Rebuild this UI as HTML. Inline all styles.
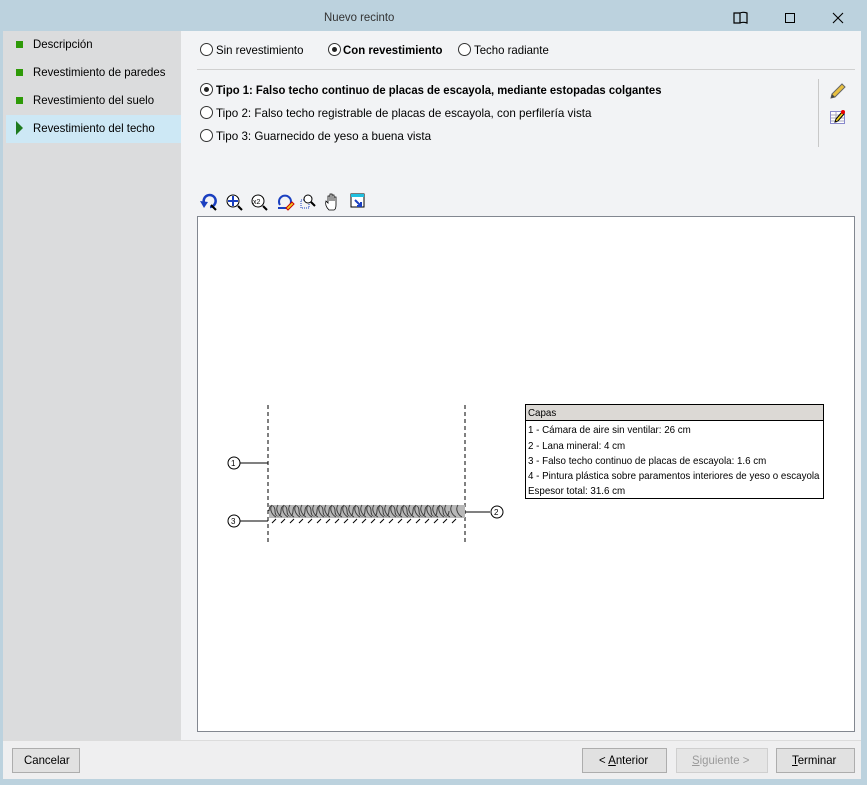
<!DOCTYPE html>
<html><head><meta charset="utf-8"><style>
*{margin:0;padding:0;box-sizing:border-box}
body{width:867px;height:785px;background:#bcd2de;font-family:"Liberation Sans",sans-serif;font-size:12px;color:#000;position:relative;overflow:hidden}
.a{position:absolute}
.n{position:absolute;white-space:nowrap;transform:scaleX(.95);transform-origin:0 50%}
.s{position:absolute;white-space:nowrap;font-size:10.5px;transform:scaleX(.93);transform-origin:0 50%;left:528px}
.rad{position:absolute;width:13px;height:13px;border:1px solid #333;border-radius:50%;background:#fff}
.rad.on::after{content:"";position:absolute;left:3px;top:3px;width:5px;height:5px;border-radius:50%;background:#222}
.btn{position:absolute;top:748px;height:25px;border:1px solid #adadad;background:#e1e1e1;text-align:center;line-height:23px}
.sq{position:absolute;left:16px;width:7px;height:7px;background:#2e9a07}
</style></head><body>
<div class="a" style="left:0;top:0;width:867px;height:31px;background:#bcd2de"></div>
<div class="n" style="left:324px;top:10px;color:#333">Nuevo recinto</div>
<svg class="a" style="left:733px;top:11px" width="16" height="14"><path d="M1 2h6v10H1zM7 2c2-1 4-1 7 0v10c-3-1-5-1-7 0" fill="none" stroke="#000" stroke-width="1.2"/></svg>
<div class="a" style="left:785px;top:13px;width:10px;height:10px;border:1px solid #000"></div>
<svg class="a" style="left:832px;top:12px" width="12" height="12"><path d="M1 1L11 11M11 1L1 11" stroke="#000" stroke-width="1.1"/></svg>
<div class="a" style="left:3px;top:31px;width:178px;height:709px;background:#dbdcdd"></div>
<div class="a" style="left:181px;top:31px;width:680px;height:709px;background:#f2f3f5"></div>
<div class="a" style="left:3px;top:740px;width:858px;height:39px;background:#efeff0;border-top:1px solid #dcdcdc"></div>
<div class="sq" style="top:41px"></div><div class="n" style="left:33px;top:37px">Descripción</div>
<div class="sq" style="top:69px"></div><div class="n" style="left:33px;top:65px">Revestimiento de paredes</div>
<div class="sq" style="top:97px"></div><div class="n" style="left:33px;top:93px">Revestimiento del suelo</div>
<div class="a" style="left:6px;top:115px;width:175px;height:28px;background:#cde8f5"></div>
<svg class="a" style="left:16px;top:121px" width="8" height="14"><path d="M0 0L7 7L0 14z" fill="#1e7a1e"/></svg>
<div class="n" style="left:33px;top:121px">Revestimiento del techo</div>
<div class="rad" style="left:200px;top:43px"></div><div class="n" style="left:216px;top:43px">Sin revestimiento</div>
<div class="rad on" style="left:328px;top:43px"></div><div class="n" style="left:343px;top:43px;font-weight:bold">Con revestimiento</div>
<div class="rad" style="left:458px;top:43px"></div><div class="n" style="left:474px;top:43px">Techo radiante</div>
<div class="a" style="left:197px;top:69px;width:658px;height:1px;background:#d0d0d0"></div>
<div class="rad on" style="left:200px;top:83px"></div><div class="n" style="left:216px;top:83px;font-weight:bold;transform:scaleX(.94)">Tipo 1: Falso techo continuo de placas de escayola, mediante estopadas colgantes</div>
<div class="rad" style="left:200px;top:106px"></div><div class="n" style="left:216px;top:106px;transform:scaleX(.97)">Tipo 2: Falso techo registrable de placas de escayola, con perfilería vista</div>
<div class="rad" style="left:200px;top:129px"></div><div class="n" style="left:216px;top:129px;transform:scaleX(.97)">Tipo 3: Guarnecido de yeso a buena vista</div>
<div class="a" style="left:818px;top:79px;width:1px;height:68px;background:#c8c8c8"></div>
<svg class="a" style="left:829px;top:82px" width="18" height="18"><path d="M2 16l1-4L13 2l3 3L6 15z" fill="#e8c040" stroke="#666"/><path d="M2 16l1-4 3 3z" fill="#444"/></svg>
<svg class="a" style="left:830px;top:109px" width="16" height="16"><rect x="0.5" y="2.5" width="14" height="12" fill="#fff" stroke="#8888cc"/><path d="M1 6h13M1 9h13M1 12h13M6 3v11" stroke="#aab"/><path d="M5 13l1-3 6-7 2 2-6 7z" fill="#f0d020" stroke="#000"/><circle cx="13" cy="3" r="2" fill="#e00"/></svg>
<svg class="a" style="left:198px;top:191px" width="175" height="22" font-size="8">
<path d="M6 12a6 6 0 1 1 6 4" fill="none" stroke="#1a3fc0" stroke-width="2.5"/><path d="M2 10l4 7 4-6z" fill="#1a3fc0"/><path d="M13 14l5 5" stroke="#000" stroke-width="2"/>
<circle cx="35" cy="10" r="6" fill="#fff" stroke="#000"/><path d="M35 5v10M30 10h10" stroke="#1a3fc0" stroke-width="2"/><path d="M40 15l4 4" stroke="#000" stroke-width="2"/>
<circle cx="60" cy="10" r="6" fill="#fff" stroke="#000"/><text x="55" y="13" font-size="7">x2</text><path d="M65 15l4 4" stroke="#000" stroke-width="2"/>
<path d="M82 14a6 6 0 1 1 10 0" fill="none" stroke="#1a3fc0" stroke-width="2"/><path d="M80 17h12" stroke="#1a3fc0" stroke-width="2"/><path d="M88 17l6-6 2 2-6 6z" fill="#f0d020" stroke="#c00"/>
<rect x="103" y="9" width="8" height="8" fill="none" stroke="#1a3fc0" stroke-dasharray="1 1"/><circle cx="110" cy="8" r="4" fill="#fff" stroke="#000"/><path d="M113 11l4 4" stroke="#000" stroke-width="2"/>
<path d="M131 19c-3-3-4-6-3-9l2 2V5h2v5V3h2v7V4h2v6V6h2v8c0 3-1 5-2 5z" fill="#fff" stroke="#000" stroke-width=".8"/>
<rect x="153" y="3" width="13" height="13" fill="#fff" stroke="#000"/><rect x="153" y="3" width="13" height="3" fill="#20c0e0"/><path d="M157 9l6 6M163 11v4h-4" stroke="#1a3fc0" stroke-width="2" fill="none"/>
</svg>
<div class="a" style="left:197px;top:216px;width:658px;height:516px;background:#fff;border:1px solid #828790"></div>
<svg class="a" style="left:220px;top:395px" width="300" height="150">
<path d="M48 10v138M245 10v138" stroke="#000" stroke-dasharray="4 3"/>
<rect x="49" y="110" width="196" height="13" fill="#b8b8b8"/>
<g stroke="#333" fill="none" stroke-width=".9">
<path d="M49 122c0-14 6-14 6 0s6 14 6 0 6-14 6 0 6 14 6 0 6-14 6 0 6 14 6 0 6-14 6 0 6 14 6 0 6-14 6 0 6 14 6 0 6-14 6 0 6 14 6 0 6-14 6 0 6 14 6 0 6-14 6 0 6 14 6 0 6-14 6 0 6 14 6 0 6-14 6 0 6 14 6 0 6-14 6 0 6 14 6 0 6-14 6 0 6 14 6 0 6-14 6 0 6 14 6 0 6-14 6 0 6 14 6 0 6-14 6 0 6 14 6 0" transform="translate(0,-6) scale(1,0.5) translate(0,122)"/>
<path d="M52 110c-3 4 0 10 4 12M58 110c-3 4 0 10 4 12M64 110c-3 4 0 10 4 12M70 110c-3 4 0 10 4 12M76 110c-3 4 0 10 4 12M82 110c-3 4 0 10 4 12M88 110c-3 4 0 10 4 12M94 110c-3 4 0 10 4 12M100 110c-3 4 0 10 4 12M106 110c-3 4 0 10 4 12M112 110c-3 4 0 10 4 12M118 110c-3 4 0 10 4 12M124 110c-3 4 0 10 4 12M130 110c-3 4 0 10 4 12M136 110c-3 4 0 10 4 12M142 110c-3 4 0 10 4 12M148 110c-3 4 0 10 4 12M154 110c-3 4 0 10 4 12M160 110c-3 4 0 10 4 12M166 110c-3 4 0 10 4 12M172 110c-3 4 0 10 4 12M178 110c-3 4 0 10 4 12M184 110c-3 4 0 10 4 12M190 110c-3 4 0 10 4 12M196 110c-3 4 0 10 4 12M202 110c-3 4 0 10 4 12M208 110c-3 4 0 10 4 12M214 110c-3 4 0 10 4 12M220 110c-3 4 0 10 4 12M226 110c-3 4 0 10 4 12M232 110c-3 4 0 10 4 12M238 110c-3 4 0 10 4 12"/>
</g>
<path d="M52 128l4-4M61 128l4-4M70 128l4-4M79 128l4-4M88 128l4-4M97 128l4-4M106 128l4-4M115 128l4-4M124 128l4-4M133 128l4-4M142 128l4-4M151 128l4-4M160 128l4-4M169 128l4-4M178 128l4-4M187 128l4-4M196 128l4-4M205 128l4-4M214 128l4-4M223 128l4-4M232 128l4-4" stroke="#000"/>
<path d="M20 68h28M20 126h28M245 117h25" stroke="#000"/>
<circle cx="14" cy="68" r="6" fill="#fff" stroke="#000"/><text x="11" y="71" font-size="8">1</text>
<circle cx="14" cy="126" r="6" fill="#fff" stroke="#000"/><text x="11" y="129" font-size="8">3</text>
<circle cx="277" cy="117" r="6" fill="#fff" stroke="#000"/><text x="274" y="120" font-size="8">2</text>
</svg>
<div class="a" style="left:525px;top:404px;width:299px;height:95px;border:1px solid #000;background:#fff"></div>
<div class="a" style="left:526px;top:405px;width:297px;height:16px;background:#dcd9d5;border-bottom:1px solid #000"></div>
<div class="s" style="top:407px">Capas</div>
<div class="s" style="top:424px">1 - Cámara de aire sin ventilar: 26 cm</div>
<div class="s" style="top:440px">2 - Lana mineral: 4 cm</div>
<div class="s" style="top:455px">3 - Falso techo continuo de placas de escayola: 1.6 cm</div>
<div class="s" style="top:470px">4 - Pintura plástica sobre paramentos interiores de yeso o escayola</div>
<div class="s" style="top:485px">Espesor total: 31.6 cm</div>
<div class="btn" style="left:12px;width:68px"><span class="n" style="left:11px;top:5px;line-height:12px">Cancelar</span></div>
<div class="btn" style="left:582px;width:85px"><span class="n" style="left:16px;top:5px;line-height:12px">&lt; <u>A</u>nterior</span></div>
<div class="btn" style="left:676px;width:92px;color:#9a9a9a;border-color:#cfcfcf;background:#e5e5e5"><span class="n" style="left:15px;top:5px;line-height:12px"><u>S</u>iguiente &gt;</span></div>
<div class="btn" style="left:776px;width:79px"><span class="n" style="left:15px;top:5px;line-height:12px"><u>T</u>erminar</span></div>
</body></html>
